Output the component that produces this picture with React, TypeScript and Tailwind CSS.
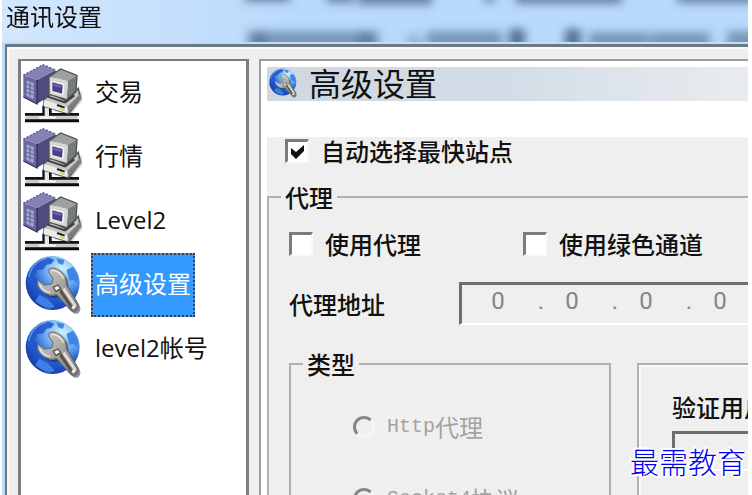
import { useState } from "react";

const items = [
  { label: "交易", icon: "computer" },
  { label: "行情", icon: "computer" },
  { label: "Level2", icon: "computer" },
  { label: "高级设置", icon: "globe" },
  { label: "level2帐号", icon: "globe" },
];

const proxyTypes = [
  { latin: "Http", rest: "代理" },
  { latin: "Socket4", rest: "协议" },
];

function ComputerIcon() {
  return (
    <svg viewBox="0 0 192 192" className="size-16 shrink-0" aria-hidden="true">
      {/* drop shadow */}
      <path d="M100 118L182 92L184 118L146 164L100 150Z" fill="#8d8f92" opacity="0.5" />
      {/* network cable */}
      <path d="M12 157H174L166 182H14Z" fill="#c9cccc" />
      <path d="M12 160H68V134M174 160H88V138" fill="none" stroke="#111" strokeWidth="8" />
      <path d="M12 179H174" stroke="#0a0a0a" strokeWidth="9" />
      <path d="M71 134H84V171H71Z" fill="#e4e6e6" />
      <path d="M54 166H104V173H54Z" fill="#f4f4f4" />
      {/* tower */}
      <path d="M7 43L66 11L104 27L48 57Z" fill="#8583b6" />
      <path d="M48 57L104 27V92L48 129Z" fill="#4f4d80" />
      <path d="M7 43L48 57V129L7 108Z" fill="#6867a0" />
      <path d="M17 58L38 66V114L17 104Z" fill="#a9a9cf" />
      <path d="M18 70L37 77M18 82L37 89M18 94L37 101M27 63V107" stroke="#5d5c93" strokeWidth="3" />
      <path d="M7 43L66 11L104 27" fill="none" stroke="#55548a" strokeWidth="4" strokeDasharray="6 5" />
      <path d="M48 57V129L7 108" fill="none" stroke="#343260" strokeWidth="4" />
      {/* base unit */}
      <path d="M68 116L90 98L138 121L172 82L178 112L143 158L69 136Z" fill="#c4c6c3" stroke="#4b4d4c" strokeWidth="4" />
      <path d="M68 117L139 137V157L69 136Z" fill="#ededeb" />
      <path d="M139 137L178 98V114L143 157Z" fill="#7d807e" />
      <path d="M80 107L132 124L160 103" fill="none" stroke="#3c3e3d" strokeWidth="6" />
      <path d="M108 132L131 140" stroke="#222" strokeWidth="6" />
      <path d="M116 143L131 148" stroke="#d5db55" strokeWidth="6" />
      {/* monitor */}
      <path d="M84 48L119 24L168 43L140 61Z" fill="#9ba19f" />
      <path d="M140 60L168 43L165 91L137 116Z" fill="#757c7a" />
      <path d="M84 48Q112 51 141 61L137 116L84 100Z" fill="#d6d7d5" />
      <path d="M84 48L119 24L168 43L165 91L137 116L84 100Z" fill="none" stroke="#4f5453" strokeWidth="4" />
      <path d="M91 59L130 69L127 103L91 93Z" fill="#f7f7f5" />
      <path d="M94 64L125 72L123 98L94 90Z" fill="#464083" />
      <path d="M97 68L121 74L120 80L97 75Z" fill="#6e69ac" />
    </svg>
  );
}

function GlobeIcon({ className }: { className: string }) {
  return (
    <svg viewBox="0 0 192 192" className={className} aria-hidden="true">
      <defs>
        <radialGradient id="globe" cx="0.68" cy="0.22" r="0.85">
          <stop offset="0" stopColor="#d2f0ff" />
          <stop offset="0.35" stopColor="#72b3f4" />
          <stop offset="0.65" stopColor="#2560d4" />
          <stop offset="1" stopColor="#1739a5" />
        </radialGradient>
        <linearGradient id="steel" x1="0" y1="0" x2="1" y2="1">
          <stop offset="0" stopColor="#d8d8d4" />
          <stop offset="0.5" stopColor="#a3a29e" />
          <stop offset="1" stopColor="#77766f" />
        </linearGradient>
      </defs>
      <circle cx="95" cy="90" r="81" fill="url(#globe)" />
      <path d="M26 62Q44 22 83 14L100 20L91 32L76 36L65 50L49 51L42 70L53 83L43 97L19 94Z" fill="#2458cc" opacity="0.9" />
      <path d="M106 16L130 21L126 36L112 31ZM137 51L156 41L171 66L172 91L155 81L145 84Z" fill="#3d86e6" />
      <path d="M55 125L80 137L102 161L86 167Q63 162 43 143Z" fill="#3f7ee4" />
      <path d="M23 72Q34 26 76 16" fill="none" stroke="#76b5f8" strokeWidth="4" opacity="0.7" />
      {/* wrench */}
      <path
        d="M84 49Q94 42 106 47Q126 54 134 73L137 96L170 151Q176 164 166 173Q155 180 145 168L107 125Q91 132 73 122Q53 111 49 91L50 82L71 97L92 93L96 76L84 59Z"
        transform="translate(6 7)"
        fill="#122139"
        opacity="0.5"
      />
      <path
        d="M84 49Q94 42 106 47Q126 54 134 73L137 96L170 151Q176 164 166 173Q155 180 145 168L107 125Q91 132 73 122Q53 111 49 91L50 82L71 97L92 93L96 76L84 59Z"
        fill="url(#steel)"
        stroke="#66655f"
        strokeWidth="3"
        strokeLinejoin="round"
      />
      <path d="M91 52Q117 53 127 77M56 96Q67 116 88 118" fill="none" stroke="#eeeeea" strokeWidth="4" />
      <path d="M120 115L152 163" stroke="#55544e" strokeWidth="9" strokeLinecap="round" />
      <path d="M130 110L162 158" stroke="#deddd7" strokeWidth="9" strokeLinecap="round" />
      <path d="M97 103L111 96L119 107L105 115Z" fill="#f7f7f5" stroke="#55544e" strokeWidth="4" />
      <circle cx="157" cy="163" r="5" fill="#f6f6f2" />
    </svg>
  );
}

// text of the window behind, seen through the glass title bar
function GlassSmears() {
  return (
    <svg viewBox="0 0 746 44" preserveAspectRatio="xMinYMin slice" className="absolute inset-0 size-full" aria-hidden="true">
      <defs>
        <filter id="smear" filterUnits="userSpaceOnUse" x="200" y="-40" width="600" height="130">
          <feGaussianBlur stdDeviation="5 4" />
        </filter>
      </defs>
      <g filter="url(#smear)" fill="#46617f">
        <path d="M243 -12H288V2H243ZM325 -12H352V3H325ZM356 -12H430V5H356ZM483 -12H492V3H483ZM514 -12H620V4H514ZM675 -12H760V3H675Z" opacity="0.7" />
        <path d="M246 31H377V50H246Z" opacity="0.55" />
        <path d="M249 31H264V50H249ZM357 31H371V50H357Z" opacity="0.45" />
        <path d="M405 34H420V50H405Z" opacity="0.3" />
        <path d="M425 31H500V50H425Z" opacity="0.55" />
        <path d="M507 29H523V50H507ZM563 29H579V50H563Z" opacity="0.85" />
        <path d="M587 32H646V50H587ZM648 32H708V50H648ZM725 31H760V50H725Z" opacity="0.55" />
      </g>
    </svg>
  );
}

const boxClass =
  "size-6 shrink-0 appearance-none border-t-[3px] border-l-[3px] border-r-2 border-b-2 border-t-[#7c7c7c] border-l-[#7c7c7c] border-r-[#f8f8f8] border-b-[#f8f8f8] bg-white";

function Check({ label, defaultChecked }: { label: string; defaultChecked?: boolean }) {
  const [on, setOn] = useState(!!defaultChecked);
  return (
    <label className="flex items-center gap-3 whitespace-nowrap">
      <span className="relative flex">
        <input type="checkbox" checked={on} onChange={() => setOn(!on)} className={boxClass} />
        {on && (
          <svg viewBox="0 0 24 24" className="pointer-events-none absolute inset-0 size-6" aria-hidden="true">
            <path d="M6 9L11 13L19 6V12L11 20L6 15Z" fill="#111" />
          </svg>
        )}
      </span>
      {label}
    </label>
  );
}

export default function App() {
  const [selected, setSelected] = useState(3);

  return (
    <div className="h-screen overflow-hidden bg-white pl-[2px] pr-1 font-['Noto_Sans_CJK_SC',sans-serif] text-2xl leading-6 text-[#111]">
      <main className="relative flex h-full flex-col overflow-hidden bg-[#bcdcf8]">
        {/* title bar */}
        <header className="relative h-11 shrink-0 border-b-2 border-[#c6dbf0] bg-linear-to-r from-[#d3e7fc] via-[#b9dafc] via-40% to-[#b9dafc] px-1">
          <GlassSmears />
          <h1 className="relative leading-8">通讯设置</h1>
        </header>

        <div className="ml-[3px] flex min-h-0 flex-1 gap-[10px] border-t-[3px] border-l-2 border-[#6b7885] bg-[#efefef] pt-3 pl-[11px] shadow-[inset_2px_2px_#fafafa]">
          {/* sidebar */}
          <nav className="w-[231px] shrink-0 border-x-[3px] border-t-2 border-[#7c7e82] bg-white font-['Open_Sans','Noto_Sans_CJK_SC',sans-serif]">
            {items.map((item, index) => (
              <button
                key={item.label}
                type="button"
                onClick={() => setSelected(index)}
                className="flex h-16 w-full items-center gap-[6px] text-left"
              >
                {item.icon === "computer" ? <ComputerIcon /> : <GlobeIcon className="size-16 shrink-0" />}
                <span
                  className={
                    index === selected
                      ? "flex h-16 items-center border-2 border-dotted border-[#5b3a1c] bg-[#3399ff] px-[2px] pb-[2px] text-white"
                      : "flex h-16 items-center px-1 pb-[2px]"
                  }
                >
                  {item.label}
                </span>
              </button>
            ))}
          </nav>

          {/* settings */}
          <section className="flex min-w-0 flex-1 flex-col border-t-2 border-l-2 border-[#9a9ca6] bg-white pt-[6px] pl-[6px]">
            <div className="flex h-[34px] shrink-0 items-start gap-[10px] bg-linear-to-r from-[#cfd8e0] via-[#d3dde7] to-[#e9ecef]">
              <GlobeIcon className="size-8 shrink-0" />
              <h2 className="text-[32px] leading-[30px]">高级设置</h2>
            </div>

            <form className="mt-9 min-h-0 flex-1 bg-[#efefef] pt-[2px] font-medium">
              <div className="flex pl-[18px]">
                <Check label="自动选择最快站点" defaultChecked />
              </div>

              <fieldset className="mt-[22px] h-full min-w-0 border-t-2 border-l-2 border-[#b0b0b0] pl-5">
                <legend className="-ml-2 bg-[#efefef] px-1">代理</legend>

                <div className="flex pt-[23px]">
                  <div className="w-[234px] shrink-0">
                    <Check label="使用代理" />
                  </div>
                  <Check label="使用绿色通道" />
                </div>

                <div className="mt-[26px] flex items-center" role="group" aria-labelledby="addr">
                  <span id="addr" className="w-[170px] shrink-0">代理地址</span>
                  <div className="flex h-[43px] min-w-0 flex-1 overflow-hidden border-t-[3px] border-b-2 border-l-[3px] border-t-[#6e6e6e] border-b-white border-l-[#6e6e6e] pl-2 font-['Roboto',sans-serif] font-normal text-[#858585]">
                    {[1, 2, 3, 4].map((n) => (
                      <div key={n} className="flex h-8 shrink-0 items-center">
                        <input
                          aria-label={`代理地址 ${n}`}
                          disabled
                          defaultValue="0"
                          className="w-[56px] text-center"
                        />
                        {n < 4 && <span className="w-[18px] text-right">.</span>}
                      </div>
                    ))}
                  </div>
                </div>

                <div className="mt-[27px] flex h-full gap-[26px]">
                  <fieldset className="w-[322px] shrink-0 border-x-2 border-t-2 border-[#b0b0b0] pl-[62px]">
                    <legend className="-ml-[50px] bg-[#efefef] px-1">类型</legend>
                    <div className="flex flex-col gap-12 pt-[39px] font-normal text-[#a3a3a3]">
                      {proxyTypes.map((type) => (
                        <label key={type.latin} className="flex items-center gap-3">
                          <input
                            type="radio"
                            name="type"
                            disabled
                            className="size-[22px] shrink-0 appearance-none rounded-full border-[3px] border-t-[#858585] border-r-[#f6f6f6] border-b-[#f6f6f6] border-l-[#858585]"
                          />
                          <span className="flex">
                            <span className="font-['Liberation_Mono',monospace] text-xl leading-6">{type.latin}</span>
                            {type.rest}
                          </span>
                        </label>
                      ))}
                    </div>
                  </fieldset>

                  <div className="mt-[11px] min-w-0 flex-1 border-t-2 border-l-2 border-[#b0b0b0] pt-[30px] pl-[33px] shadow-[inset_2px_2px_#fafafa]">
                    <label htmlFor="user" className="block overflow-hidden whitespace-nowrap">验证用户</label>
                    <input
                      id="user"
                      disabled
                      className="mt-3 block h-10 w-full border-t-[3px] border-b-2 border-l-[3px] border-t-[#6e6e6e] border-b-white border-l-[#6e6e6e]"
                    />
                  </div>
                </div>
              </fieldset>
            </form>
          </section>
        </div>

        {/* site mark */}
        <p className="absolute right-[2px] bottom-[18px] text-[29px] leading-8 font-light text-[#0000f5] [text-shadow:-2px_0_white,2px_0_white,0_-2px_white,0_2px_white,2px_2px_white,-2px_-2px_white]">
          最需教育
        </p>
      </main>
    </div>
  );
}
